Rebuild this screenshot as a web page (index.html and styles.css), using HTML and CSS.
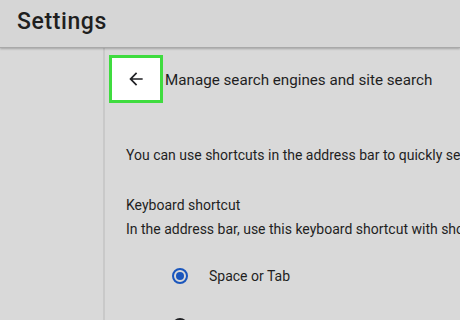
FILE: index.html
```html
<!DOCTYPE html>
<html lang="en">
<head>
    <meta charset="UTF-8">
    <meta name="viewport" content="width=device-width, initial-scale=1.0">
    <title>Settings</title>
    <link rel="stylesheet" href="styles.css">
</head>
<body>
    <header class="topbar">
        <h1>Settings</h1>
    </header>
    <div class="page">
        <nav class="sidebar"></nav>
        <main class="content">
            <div class="subpage-title">
                <button class="back-btn" aria-label="Back">
                    <svg width="20" height="20" viewBox="0 0 24 24">
                        <path d="M20 11H7.83l5.59-5.59L12 4l-8 8 8 8 1.41-1.41L7.83 13H20v-2z" fill="#202124"/>
                    </svg>
                </button>
                <h2>Manage search engines and site search</h2>
            </div>
            <p class="intro">You can use shortcuts in the address bar to quickly search other sites</p>
            <div class="shortcut">
                <div class="shortcut-label">Keyboard shortcut</div>
                <div class="shortcut-desc">In the address bar, use this keyboard shortcut with shortcuts</div>
            </div>
            <div class="radio-list">
                <label class="radio-row">
                    <span class="radio checked"></span>
                    <span>Space or Tab</span>
                </label>
                <label class="radio-row">
                    <span class="radio"></span>
                    <span>Tab</span>
                </label>
            </div>
        </main>
    </div>
</body>
</html>
```

FILE: styles.css
```css
:root{
    --back: #d9d9d9;
    --bar: #d6d6d6;
    --textcolor: #1f1f1f;
    --blue: #1a56bd;
    --green: #3fdc3f;
}
html, body {
    width: 100%;
    height: 100%;
    overflow: hidden;
}
body {
    margin: 0;
    font-family: Roboto, "Liberation Sans", Arial, sans-serif;
    background-color: var(--back);
    color: var(--textcolor);
}
.topbar {
    height: 47px;
    background-color: var(--bar);
    border-bottom: 1px solid #a9a9a9;
    box-shadow: 0 1px 2px rgba(0, 0, 0, 0.25);
    display: flex;
    align-items: center;
    padding-left: 17px;
    position: relative;
}
.topbar h1 {
    margin: 0 0 4px 0;
    font-size: 23px;
    font-weight: 500;
    letter-spacing: 0.6px;
}
.page {
    display: flex;
    height: calc(100% - 48px);
}
.sidebar {
    width: 103px;
    border-right: 2px solid #c9c9c9;
    flex-shrink: 0;
}
.content {
    flex: 1;
    padding-top: 7px;
    padding-left: 4px;
    white-space: nowrap;
    overflow: hidden;
}
.subpage-title {
    display: flex;
    align-items: center;
}
.back-btn {
    width: 54px;
    height: 48px;
    box-sizing: border-box;
    background: #fff;
    border: 3px solid var(--green);
    display: flex;
    align-items: center;
    justify-content: center;
    padding: 0;
    margin-right: 2px;
}
.subpage-title h2 {
    margin: 2px 0 0 0;
    font-size: 15.2px;
    font-weight: 400;
}
.intro {
    margin: 44px 0 0 17px;
    font-size: 14px;
}
.shortcut {
    margin: 34px 0 0 17px;
    font-size: 14px;
}
.shortcut-desc {
    margin-top: 8px;
}
.radio-list {
    margin: 31px 0 0 63px;
    display: flex;
    flex-direction: column;
    gap: 34px;
    font-size: 14px;
}
.radio-row {
    display: flex;
    align-items: center;
    gap: 21px;
}
.radio {
    width: 16px;
    height: 16px;
    box-sizing: border-box;
    border-radius: 50%;
    border: 2px solid #202124;
    display: flex;
    align-items: center;
    justify-content: center;
}
.radio.checked {
    border-color: var(--blue);
}
.radio.checked::after {
    content: "";
    width: 8px;
    height: 8px;
    border-radius: 50%;
    background: var(--blue);
}
```
